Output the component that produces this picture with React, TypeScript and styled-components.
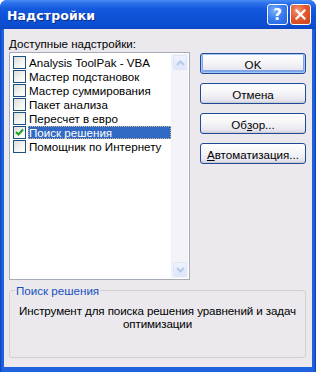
import React from "react";
import styled, { createGlobalStyle } from "styled-components";

const Global = createGlobalStyle`
  html, body { margin: 0; padding: 0; background: #fff; }
  body { font-family: "Liberation Sans", Arial, sans-serif; }
`;

const Window = styled.div`
  width: 316px;
  height: 372px;
  box-sizing: border-box;
  display: flex;
  flex-direction: column;
  background: #0a52d8;
  border-radius: 7px 7px 0 0;
  overflow: hidden;
`;

const TitleBar = styled.div`
  height: 29px;
  flex: none;
  display: flex;
  align-items: center;
  padding: 0 5px 0 7px;
  background: linear-gradient(
    180deg,
    #4a8df5 0%,
    #2d74ec 10%,
    #1459de 30%,
    #0e51d6 60%,
    #0c4fd3 85%,
    #0a47c4 100%
  );
`;

const Title = styled.div`
  flex: 1;
  color: #fff;
  font-family: "DejaVu Sans", "Liberation Sans", sans-serif;
  font-weight: bold;
  font-size: 12.5px;
  letter-spacing: 0.1px;
  text-shadow: 1px 1px 0 #0b2c8a;
  margin-top: 1px;
`;

const CaptionButton = styled.div<{ $kind: "help" | "close" }>`
  width: 21px;
  height: 21px;
  box-sizing: border-box;
  border: 1px solid #fff;
  border-radius: 3px;
  margin-left: 2px;
  display: flex;
  align-items: center;
  justify-content: center;
  background: ${(p) =>
    p.$kind === "close"
      ? "radial-gradient(circle at 35% 30%, #f29b7a 0%, #e4582d 45%, #c9421a 100%)"
      : "radial-gradient(circle at 35% 30%, #7fb0fb 0%, #3a7ff0 45%, #2263dc 100%)"};
  color: #fff;
  font-family: "DejaVu Sans", sans-serif;
  font-weight: bold;
  font-size: 15px;
`;

const Frame = styled.div`
  flex: 1;
  display: flex;
  padding: 0 5px 5px 4px;
  background: linear-gradient(90deg, #0a3fb8 0, #1e62e0 2px, #1e62e0 calc(100% - 2px), #0a3fb8 100%);
`;

const Body = styled.div`
  flex: 1;
  background: #ebe9ed;
  display: flex;
  flex-direction: column;
  padding: 8px 6px 6px 5px;
  font-family: "Liberation Sans", Arial, sans-serif;
  font-size: 11.6px;
  color: #000;
`;

const Top = styled.div`
  display: flex;
  gap: 10px;
`;

const LeftCol = styled.div`
  display: flex;
  flex-direction: column;
`;

const Label = styled.div`
  height: 15px;
  line-height: 14px;
`;

const U = styled.span`
  text-decoration: underline;
`;

const ListBox = styled.div`
  width: 181px;
  height: 228px;
  box-sizing: border-box;
  border: 1px solid #a5acb5;
  background: #fff;
  display: flex;
  padding: 1px;
`;

const Items = styled.div`
  flex: 1;
  display: flex;
  flex-direction: column;
  padding-top: 1px;
`;

const Item = styled.div`
  height: 14px;
  display: flex;
  align-items: center;
  padding-left: 2px;
`;

const Check = styled.div`
  width: 13px;
  height: 13px;
  box-sizing: border-box;
  border: 1px solid #1c5180;
  background: linear-gradient(135deg, #dcdcd7 0%, #f5f5f2 60%, #ffffff 100%);
  flex: none;
  display: flex;
  align-items: center;
  justify-content: center;
`;

const ItemText = styled.div<{ $selected?: boolean }>`
  flex: 1;
  margin-left: 2px;
  height: 13px;
  line-height: 13px;
  padding-left: 1px;
  white-space: nowrap;
  box-sizing: border-box;
  background: ${(p) => (p.$selected ? "#316ac5" : "transparent")};
  color: ${(p) => (p.$selected ? "#fff" : "#000")};
  outline: ${(p) => (p.$selected ? "1px dotted #d8b88a" : "none")};
  outline-offset: -1px;
`;

const ScrollBar = styled.div`
  width: 16px;
  flex: none;
  background: #f4f3f8;
  border-left: 1px solid #eef0f8;
  display: flex;
  flex-direction: column;
  justify-content: space-between;
  padding: 1px 0;
`;

const ScrollButton = styled.div`
  width: 14px;
  height: 15px;
  margin-left: 1px;
  box-sizing: border-box;
  border: 1px solid #dee6f7;
  border-radius: 2px;
  background: linear-gradient(180deg, #eef3fe 0%, #dde6fb 100%);
  display: flex;
  align-items: center;
  justify-content: center;
`;

const Buttons = styled.div`
  display: flex;
  flex-direction: column;
  gap: 9px;
  padding-top: 16px;
`;

const Button = styled.div<{ $default?: boolean }>`
  width: 106px;
  height: 21px;
  box-sizing: border-box;
  border: 1px solid #1f4b96;
  border-radius: 3px;
  background: linear-gradient(180deg, #ffffff 0%, #f7f7fa 40%, #e9e8f0 80%, #d7d6e3 100%);
  box-shadow: ${(p) =>
    p.$default
      ? "inset 0 0 0 1px #a9c7f5, inset 0 -1px 0 2px #7ea6e8"
      : "inset 0 -1px 0 0 #cdcdd8"};
  display: flex;
  align-items: center;
  justify-content: center;
  padding-top: 1px;
`;

const Group = styled.fieldset`
  margin: 4px 0 0 0;
  padding: 7px 0 0;
  width: 297px;
  height: 74px;
  box-sizing: border-box;
  border: 1px solid #d2d0cc;
  border-radius: 3px;
  text-align: center;
  line-height: 13px;
`;

const Description = styled.div`
  padding: 0 4px;
  letter-spacing: -0.1px;
`;

const Legend = styled.legend`
  color: #1a50c0;
  padding: 0 1px;
  margin-left: 5px;
  text-align: left;
`;

const items = [
  "Analysis ToolPak - VBA",
  "Мастер подстановок",
  "Мастер суммирования",
  "Пакет анализа",
  "Пересчет в евро",
  "Поиск решения",
  "Помощник по Интернету",
];

export default function App() {
  return (
    <>
      <Global />
      <Window>
        <TitleBar>
          <Title>Надстройки</Title>
          <CaptionButton $kind="help">?</CaptionButton>
          <CaptionButton $kind="close">
            <svg width="11" height="11" viewBox="0 0 11 11">
              <path d="M1.5 1.5 L9.5 9.5 M9.5 1.5 L1.5 9.5" stroke="#fff" strokeWidth="2.2" strokeLinecap="square" />
            </svg>
          </CaptionButton>
        </TitleBar>
        <Frame>
          <Body>
            <Top>
              <LeftCol>
                <Label>
                  <U>Д</U>оступные надстройки:
                </Label>
                <ListBox>
                  <Items>
                    {items.map((t, i) => (
                      <Item key={t}>
                        <Check>
                          {i === 5 && (
                            <svg width="9" height="9" viewBox="0 0 9 9">
                              <path d="M1 4 L3.5 6.5 L8 1.5" stroke="#21a121" strokeWidth="2" fill="none" />
                            </svg>
                          )}
                        </Check>
                        <ItemText $selected={i === 5}>{t}</ItemText>
                      </Item>
                    ))}
                  </Items>
                  <ScrollBar>
                    <ScrollButton>
                      <svg width="9" height="6" viewBox="0 0 9 6">
                        <path d="M1 5 L4.5 1.5 L8 5" stroke="#b9c8e8" strokeWidth="2" fill="none" />
                      </svg>
                    </ScrollButton>
                    <ScrollButton>
                      <svg width="9" height="6" viewBox="0 0 9 6">
                        <path d="M1 1 L4.5 4.5 L8 1" stroke="#b9c8e8" strokeWidth="2" fill="none" />
                      </svg>
                    </ScrollButton>
                  </ScrollBar>
                </ListBox>
              </LeftCol>
              <Buttons>
                <Button $default>OK</Button>
                <Button>Отмена</Button>
                <Button>
                  Об<U>з</U>ор...
                </Button>
                <Button>
                  <U>А</U>втоматизация...
                </Button>
              </Buttons>
            </Top>
            <Group>
              <Legend>Поиск решения</Legend>
              <Description>Инструмент для поиска решения уравнений и задач оптимизации</Description>
            </Group>
          </Body>
        </Frame>
      </Window>
    </>
  );
}
